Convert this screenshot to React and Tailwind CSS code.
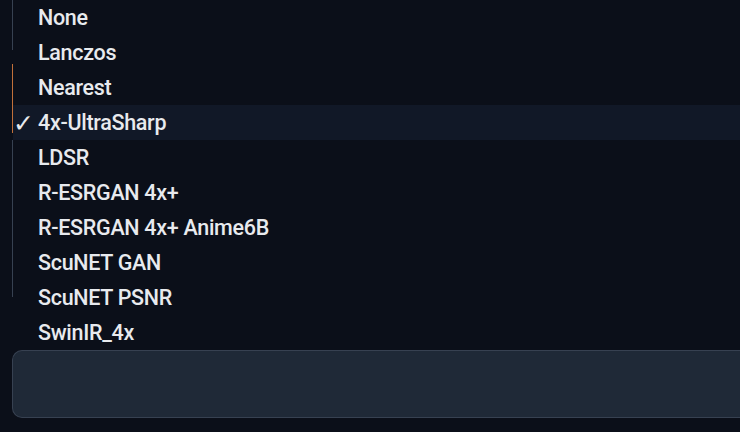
import React from "react";

const items = [
  "None",
  "Lanczos",
  "Nearest",
  "4x-UltraSharp",
  "LDSR",
  "R-ESRGAN 4x+",
  "R-ESRGAN 4x+ Anime6B",
  "ScuNET GAN",
  "ScuNET PSNR",
  "SwinIR_4x",
];

export default function App() {
  return (
    <div
      className="w-[740px] h-[432px] bg-[#0b0f19] overflow-hidden relative"
      style={{ fontFamily: 'Roboto, "Noto Sans", sans-serif' }}
    >
      <div className="absolute left-[12px] top-0 w-px h-[50px] bg-[#374151]" />
      <div className="absolute left-[12px] top-[64px] w-px h-[69px] bg-[#c2703a]" />
      <div className="absolute left-[12px] top-[140px] w-px h-[157px] bg-[#374151]" />
      <ul className="flex flex-col">
        {items.map((it) => {
          const sel = it === "4x-UltraSharp";
          return (
            <li
              key={it}
              className={
                "h-[35px] pt-[2px] flex items-center text-[21.5px] font-medium tracking-[-0.3px] text-[#e8eaee] ml-[13px] " +
                (sel ? "bg-[#111827]" : "")
              }
            >
              <span
                className="w-[25px] text-[25px] leading-none"
                style={{ fontFamily: '"DejaVu Sans", sans-serif' }}
              >
                {sel ? "✓" : ""}
              </span>
              <span>{it}</span>
            </li>
          );
        })}
      </ul>
      <div className="ml-[12px] h-[68px] rounded-l-[10px] bg-[#1f2937] border border-r-0 border-[#374151]" />
    </div>
  );
}
